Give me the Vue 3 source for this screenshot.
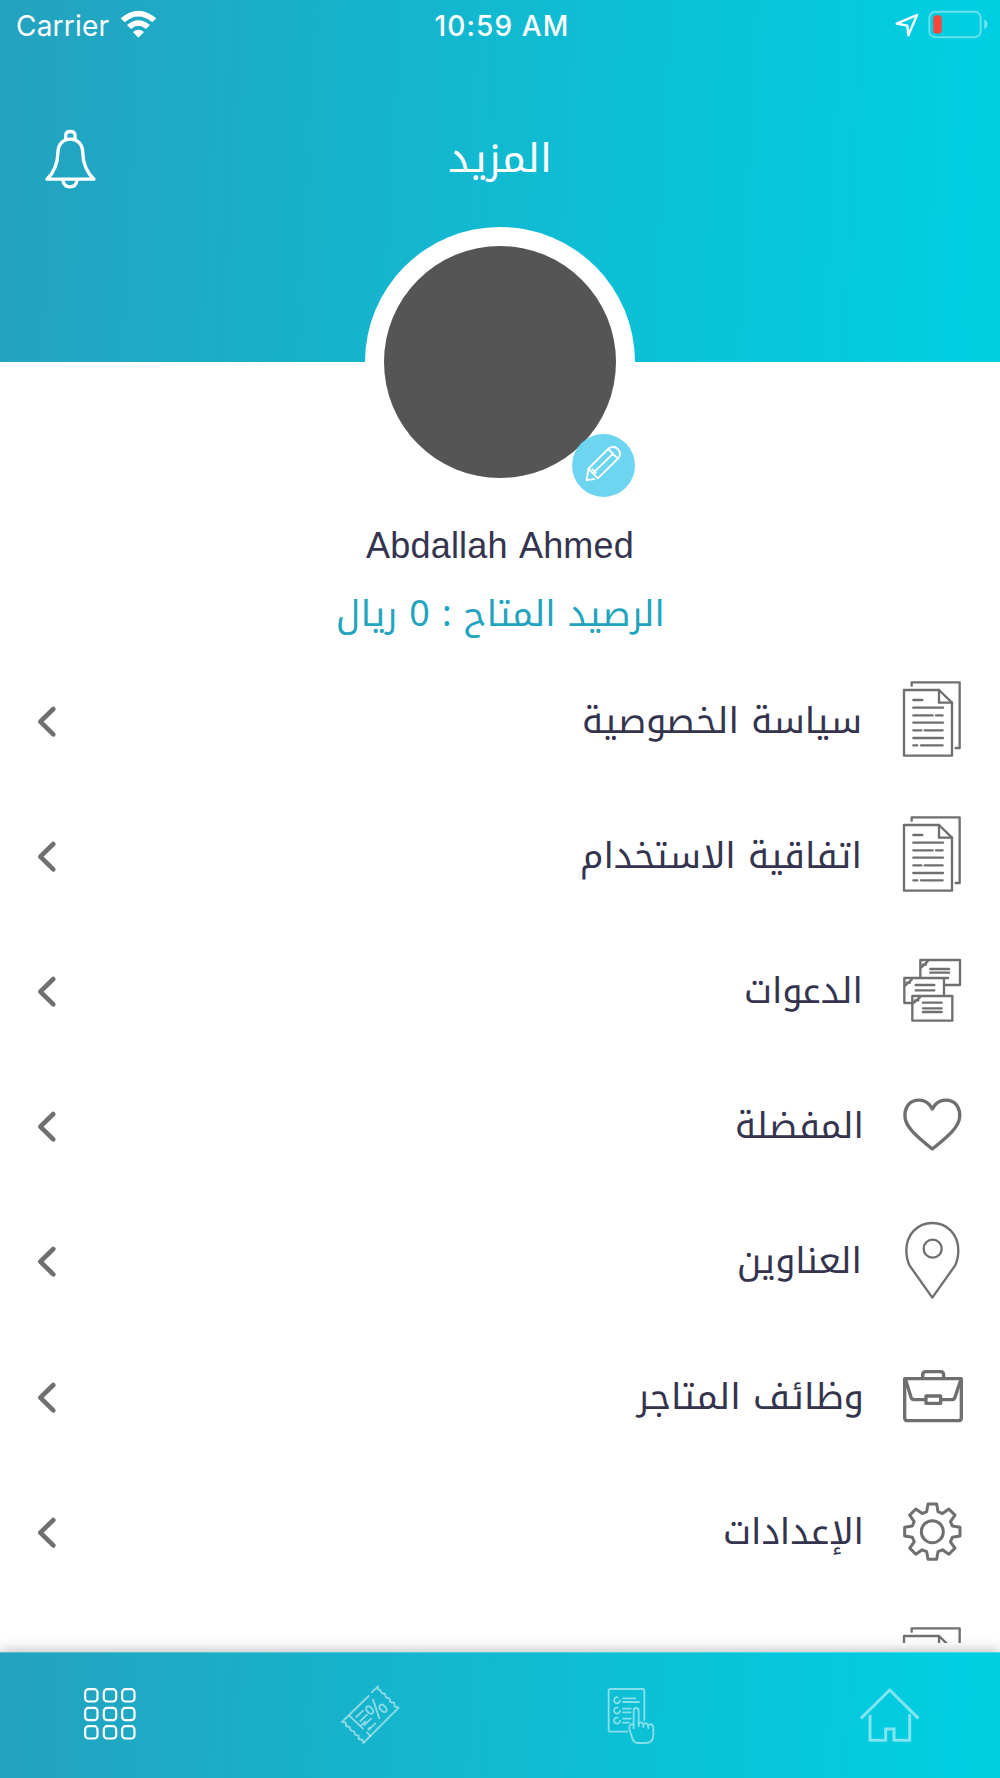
<script setup>
const docIcon = [
  "M155 77V67H299V264H287",
  "M132 90H237L276 128V287H132Z",
  "M237 90V128H276",
  "M160 120H187M160 143H249M160 166H218M228 166H248M160 188H249M160 211H184M194 211H248M160 234H249M160 256H172M183 256H248",
];

// 톱니바퀴: 톱니 8개를 45도씩 회전
function gearPath() {
  const tooth = [[-17, -60], [-13, -83], [13, -83], [17, -60]];
  const points = [];
  for (let i = 0; i < 8; i++) {
    const a = (i * Math.PI) / 4;
    tooth.forEach(([x, y]) => {
      const px = 217 + x * Math.cos(a) - y * Math.sin(a);
      const py = 995 + x * Math.sin(a) + y * Math.cos(a);
      points.push(px.toFixed(1) + " " + py.toFixed(1));
    });
  }
  return "M" + points.join("L") + "Z";
}

const menus = [
  { label: "سياسة الخصوصية", width: 280, right: 302, top: -18, stroke: 7, paths: docIcon },
  { label: "اتفاقية الاستخدام", width: 282, right: 302, top: -18, stroke: 7, paths: docIcon },
  {
    label: "الدعوات", width: 119, right: 303, top: -18, stroke: 7,
    paths: [
      "M181 142V90H300V165H254",
      "M133 144H264M133 144V219H156M252 144V196",
      "M157 198H277V272H157Z",
      "M184 112L203 94M188 104L198 104M136 166L155 149M140 158L150 158M160 219L180 202M165 211L175 211",
      "M211 117H267M211 128H267M167 165H223M167 181H223M189 218H245M189 235H245M189 246H245",
    ],
  },
  {
    label: "المفضلة", width: 129, right: 304, top: 388, stroke: 10,
    paths: ["M217 538C205 514 184 509 167 512C144 517 133 538 135 562C137 590 163 615 217 658C271 615 297 590 299 562C301 538 290 517 267 512C250 509 229 514 217 538Z"],
  },
  {
    label: "العناوين", width: 125, right: 302, top: -17, stroke: 7,
    paths: [
      "M217 294L149 198C142 184 139 169 139 152C139 104 173 70 217 70C261 70 295 104 295 152C295 169 292 184 285 198Z",
      "M245 147A27 27 0 1 1 191 147A27 27 0 1 1 245 147Z",
    ],
  },
  {
    label: "وظائف المتاجر", width: 227, right: 304, top: 389, stroke: 10,
    paths: [
      "M134 535H304V652Q304 661 295 661H143Q134 661 134 652Z",
      "M188 533V524Q188 514 198 514H241Q251 514 251 524V533",
      "M137 539L153 591Q155 598 162 598H193M302 539L285 591Q283 598 276 598H247",
      "M198 587H242V609H198Z",
    ],
  },
  {
    label: "الإعدادات", width: 141, right: 304, top: 795, stroke: 9,
    paths: [gearPath(), "M250 995A33 33 0 1 1 184 995A33 33 0 1 1 250 995Z"],
  },
  { label: "", width: 0, right: 300, top: -18, stroke: 7, paths: docIcon },
];

const gridPos = [0, 56, 111];
</script>

<template>
  <div class="more-page">
    <header class="header">
      <div class="status-bar">
        <div class="status-left">
          <span class="carrier">Carrier</span>
          <svg class="wifi" viewBox="360 28 111 84">
            <path d="M362 53Q415 7 469 53L457 65Q415 30 374 65Z" />
            <path d="M381 73Q415 44 450 73L438 85Q415 66 393 85Z" />
            <path d="M399 94Q415 80 432 94L415 111Z" />
          </svg>
        </div>
        <span class="time">10:59 AM</span>
        <div class="status-right">
          <svg class="location" viewBox="105 38 72 72">
            <path d="M110 70L171 44L145 105L142 76Z" />
          </svg>
          <svg class="battery" viewBox="203 30 180 86">
            <rect class="battery-case" x="207" y="35" width="154" height="76" rx="18" />
            <rect class="battery-level" x="219" y="45" width="25" height="55" rx="10" />
            <path class="battery-tip" d="M372 57Q381 62 381 72Q381 82 372 87Z" />
          </svg>
        </div>
      </div>
      <div class="nav-bar">
        <svg class="bell" viewBox="120 380 180 200">
          <path d="M141 536C164 514 173 489 174 454C175 430 190 416 211 416C232 416 247 430 248 454C249 489 258 514 282 536Z" />
          <path d="M197 416V405C197 397 203 393 211 393C219 393 225 397 225 405V416M189 540C191 553 199 559 210 559C221 559 229 553 231 540" />
        </svg>
        <svg class="nav-title" viewBox="0 0 200 80">
          <text class="arabic title-text" x="152" y="45" textLength="104" lengthAdjust="spacingAndGlyphs">المزيد</text>
        </svg>
      </div>
    </header>

    <section class="profile">
      <div class="avatar-ring">
        <div class="avatar"></div>
        <div class="edit-badge">
          <svg viewBox="696 674 190 190">
            <path d="M740 813L746 778L806 718C814 711 827 712 834 719C842 727 843 739 836 747L774 808L746 779M740 813L763 810M806 720L834 748M760 791L820 733M757 780L768 791" />
          </svg>
        </div>
      </div>
      <h1 class="name">Abdallah Ahmed</h1>
      <svg class="balance" viewBox="0 0 400 60">
        <text class="arabic balance-text" x="365" y="35" textLength="329" lengthAdjust="spacingAndGlyphs">الرصيد المتاح : 0 ريال</text>
      </svg>
    </section>

    <ul class="menu-list">
      <li v-for="(menu, i) in menus" :key="i" class="menu-item">
        <svg class="menu-icon" :viewBox="`0 ${menu.top} 420 405.6`" :stroke-width="menu.stroke">
          <path v-for="(d, j) in menu.paths" :key="j" :d="d" />
        </svg>
        <svg class="menu-label" viewBox="0 0 300 135.2">
          <text v-if="menu.label" class="arabic" :x="menu.right" y="79.2" :textLength="menu.width" lengthAdjust="spacingAndGlyphs">{{ menu.label }}</text>
        </svg>
        <svg class="chevron" viewBox="50 45 64 100">
          <path d="M102 57L63 95L102 133" />
        </svg>
      </li>
    </ul>

    <nav class="tab-bar">
      <svg class="tab active" viewBox="224 67 210 378">
        <template v-for="y in gridPos" :key="y">
          <rect v-for="x in gridPos" :key="x" :x="254.5 + x" :y="178.5 + y" width="37" height="37" rx="10" />
        </template>
      </svg>
      <svg class="tab ticket" viewBox="1005 67 210 378">
        <path d="M1106 199L1026 277L1037 278L1038 289L1049 292L1052 302L1063 306L1065 315L1076 318L1076 328L1088 331L1090 340L1196 234L1184 231L1183 220L1171 217L1168 206L1158 203L1155 193L1145 190L1141 181L1134 179L1134 170L1115 188" />
        <path d="M1049 259L1089 297M1101 308L1111 319M1069 262L1089 243M1081 274L1101 255M1084 287L1095 276M1093 286L1113 267M1105 298L1109 294M1107 300L1126 281M1119 210L1138 266" />
        <ellipse cx="1109" cy="241" rx="8" ry="13" transform="rotate(-43 1109 241)" />
        <ellipse cx="1149" cy="236" rx="8" ry="13" transform="rotate(-43 1149 236)" />
      </svg>
      <svg class="tab orders" viewBox="285 67 210 378">
        <path d="M382 306H331Q326 306 326 301V183Q326 178 331 178H428Q433 178 433 183V271" />
        <path d="M369 206H406M369 217H417M369 237H392M369 248H392M369 267H392M369 279H387" />
        <path d="M353 203A9 9 0 1 0 360 212M353 234A9 9 0 1 0 360 243M353 264A9 9 0 1 0 360 273" />
        <path d="M401 296V243Q401 235 408 235Q416 235 416 243V290M416 284Q419 276 427 279Q430 281 430 292M430 284Q435 279 441 282Q445 285 445 296M445 287Q450 282 456 285Q460 287 460 294V315Q460 339 438 340H414Q401 340 397 326L388 298Q386 282 401 283" />
      </svg>
      <svg class="tab home" viewBox="1065 67 210 378">
        <path d="M1086 263L1169 181L1252 263M1110 260V332H1157V298H1182V332H1229V258" />
      </svg>
    </nav>
  </div>
</template>

<style>
body {
  background-color: #fff;
}
</style>

<style scoped>
.more-page {
  display: flex;
  flex-direction: column;
  width: 1000px;
  height: 1778px;
  overflow: hidden;
  background-color: #fff;
  font-family: "Liberation Sans", sans-serif;
}

svg {
  display: block;
  flex: none;
  fill: none;
  stroke-linecap: round;
  stroke-linejoin: round;
}

.header {
  height: 362.4px;
  flex: none;
  background: linear-gradient(93deg, #24a2bf 0%, #11bad1 50%, #00cfe2 97%);
  color: #fff;
}

.status-bar {
  display: grid;
  grid-template-columns: 1fr auto 1fr;
  align-items: center;
  height: 50px;
  padding: 0 12px 0 16px;
  font-family: Inter, sans-serif;
  font-size: 28px;
}

.status-left,
.status-right {
  display: flex;
  align-items: center;
}

.status-left {
  gap: 11px;
}

.carrier {
  position: relative;
  top: 1px;
  letter-spacing: 0.2px;
}

.status-right {
  justify-content: flex-end;
  gap: 9px;
  padding-bottom: 1px;
}

.time {
  position: relative;
  top: 1px;
  font-weight: 500;
  letter-spacing: 1.1px;
}

.wifi {
  width: 37px;
  height: 28px;
  margin-bottom: 3px;
  fill: #fff;
}

.location {
  width: 24px;
  height: 24px;
  stroke: #fff;
  stroke-width: 7;
}

.battery {
  width: 60px;
  height: 29px;
}

.battery-case {
  stroke: rgba(255, 255, 255, 0.4);
  stroke-width: 6;
}

.battery-level {
  fill: #ff443a;
}

.battery-tip {
  fill: rgba(255, 255, 255, 0.45);
}

.nav-bar {
  display: grid;
  grid-template-columns: 1fr auto 1fr;
  padding: 77px 40px 0;
}

.bell {
  width: 60px;
  height: 67px;
  stroke: #fff;
  stroke-width: 10;
}

.nav-title {
  width: 200px;
  height: 80px;
  overflow: visible;
}

.arabic {
  direction: rtl;
  font-family: "Noto Kufi Arabic", "Noto Sans Arabic", "DejaVu Sans", sans-serif;
  font-size: 36px;
  fill: #34344e;
}

.title-text {
  font-size: 40px;
  fill: #fff;
}

.profile {
  display: flex;
  flex-direction: column;
  align-items: center;
  flex: none;
  height: 426.3px;
  margin-top: -135px;
}

.avatar-ring {
  position: relative;
  width: 270px;
  height: 270px;
  flex: none;
  padding: 19px;
  box-sizing: border-box;
  border-radius: 50%;
  background-color: #fff;
}

.avatar {
  height: 232px;
  border-radius: 50%;
  background-color: #555;
}

.edit-badge {
  position: absolute;
  right: 0;
  bottom: 0;
  width: 63px;
  height: 63px;
  border-radius: 50%;
  background-color: #6dd5ef;
}

.edit-badge svg {
  stroke: #fff;
  stroke-width: 5.5;
}

.name {
  margin: 28px 0 0;
  color: #34344e;
  font-size: 36px;
  font-weight: 400;
  line-height: 42px;
  letter-spacing: 0.2px;
  word-spacing: 3px;
}

.balance {
  width: 400px;
  height: 60px;
  margin-top: 24px;
  overflow: visible;
}

.balance-text {
  fill: #22a4be;
}

.menu-list {
  flex: none;
  height: 989px;
  margin: 0;
  padding: 0;
  overflow: hidden;
  list-style: none;
}

.menu-item {
  display: flex;
  flex-direction: row-reverse;
  align-items: center;
  height: 135.2px;
}

.menu-icon {
  width: 140px;
  height: 135.2px;
  stroke: #6f6f6f;
}

.menu-label {
  width: 300px;
  height: 135.2px;
  overflow: visible;
}

.chevron {
  width: 21.3px;
  height: 33.3px;
  margin-right: auto;
  margin-left: 36.2px;
  stroke: #6f6f6f;
  stroke-width: 14;
}

.tab-bar {
  display: flex;
  justify-content: space-between;
  flex: none;
  height: 126px;
  margin-top: auto;
  padding: 0 75px;
  box-sizing: border-box;
  border-top: 1px solid rgba(255, 255, 255, 0.25);
  background: linear-gradient(93deg, #24a2bf 0%, #11bad1 50%, #00cfe2 97%);
  background-origin: border-box;
  box-shadow: 0 -2px 12px rgba(0, 0, 0, 0.25);
}

.tab {
  width: 70px;
  height: 126px;
  margin-top: -1px;
  stroke: rgba(255, 255, 255, 0.5);
}

.tab.active {
  stroke: #fff;
  stroke-width: 6.5;
}

.ticket,
.orders {
  stroke-width: 5.5;
}

.home {
  stroke-width: 9;
  stroke-linecap: square;
  stroke-linejoin: miter;
}
</style>
